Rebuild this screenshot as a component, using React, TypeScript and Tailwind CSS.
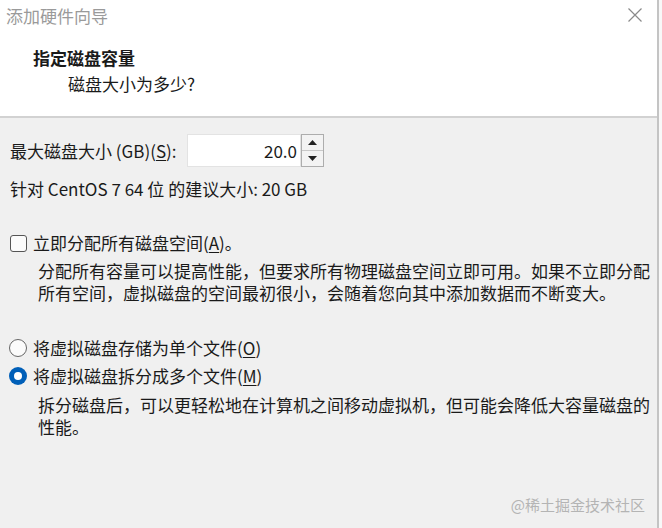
import React from 'react';

// Wizard page: "specify disk capacity"
const font = { fontFamily: '"Noto Sans CJK SC", "Noto Sans", sans-serif' };

function Checkbox() {
  return <span className="w-[17px] h-[17px] border border-[#555] rounded-[3px] bg-[#fbfbfb] shrink-0" />;
}

function Radio({ checked }: { checked?: boolean }) {
  if (checked) {
    return (
      <span className="w-[18px] h-[18px] rounded-full bg-[#005fb8] flex items-center justify-center shrink-0">
        <span className="w-[8px] h-[8px] rounded-full bg-white" />
      </span>
    );
  }
  return <span className="w-[18px] h-[18px] rounded-full border border-[#666] bg-[#fbfbfb] shrink-0" />;
}

function Spinner() {
  return (
    <div className="w-[23px] h-[33px] border border-[#adadad] bg-[#f3f3f3] flex flex-col">
      <div className="flex-1 flex items-center justify-center border-b border-[#c8c8c8]">
        <svg width="9" height="5" viewBox="0 0 9 5">
          <path d="M0 5 L4.5 0 L9 5 Z" fill="#222" />
        </svg>
      </div>
      <div className="flex-1 flex items-center justify-center">
        <svg width="9" height="5" viewBox="0 0 9 5">
          <path d="M0 0 L4.5 5 L9 0 Z" fill="#222" />
        </svg>
      </div>
    </div>
  );
}

export default function App() {
  return (
    <div className="w-[662px] h-[528px] flex bg-white text-[17px] leading-[22px] text-[#1a1a1a]" style={font}>
      <div className="w-[657px] h-full flex flex-col">
        {/* header */}
        <div className="h-[118px] bg-white border-b-2 border-[#d2d2d2] relative">
          <div className="pl-[6px] pt-[5px] text-[#9a9a9a]">添加硬件向导</div>
          <div className="pl-[33px] mt-[20px] font-bold">指定磁盘容量</div>
          <div className="pl-[68px] mt-[4px]">磁盘大小为多少?</div>
          <svg className="absolute right-[15px] top-[8px]" width="14" height="14" viewBox="0 0 14 14">
            <path d="M0.5 0.5 L13.5 13.5 M13.5 0.5 L0.5 13.5" stroke="#8a8a8a" strokeWidth="1.2" />
          </svg>
        </div>

        {/* body */}
        <div className="flex-1 bg-[#f0f0f0] relative pl-[10px] pt-[16px]">
          <div className="flex items-center h-[33px]">
            <span className="w-[177px]">
              最大磁盘大小 (GB)(<span className="underline underline-offset-2">S</span>):
            </span>
            <div className="w-[114px] h-[33px] bg-white border border-[#e3e3e3] flex items-center justify-end pr-[3px]">
              20.0
            </div>
            <Spinner />
          </div>

          <div className="mt-[11px]">针对 CentOS 7 64 位 的建议大小: 20 GB</div>

          <div className="mt-[32px] flex items-center gap-[6px] h-[22px]">
            <Checkbox />
            <span>
              立即分配所有磁盘空间(<span className="underline underline-offset-2">A</span>)。
            </span>
          </div>
          <div className="mt-[6px] pl-[28px]">
            <div>分配所有容量可以提高性能，但要求所有物理磁盘空间立即可用。如果不立即分配</div>
            <div>所有空间，虚拟磁盘的空间最初很小，会随着您向其中添加数据而不断变大。</div>
          </div>

          <div className="mt-[33px] flex items-center gap-[6px] h-[22px] -ml-[1px]">
            <Radio />
            <span>
              将虚拟磁盘存储为单个文件(<span className="underline underline-offset-2">O</span>)
            </span>
          </div>
          <div className="mt-[6px] flex items-center gap-[6px] h-[22px] -ml-[1px]">
            <Radio checked />
            <span>
              将虚拟磁盘拆分成多个文件(<span className="underline underline-offset-2">M</span>)
            </span>
          </div>
          <div className="mt-[7px] pl-[28px]">
            <div>拆分磁盘后，可以更轻松地在计算机之间移动虚拟机，但可能会降低大容量磁盘的</div>
            <div>性能。</div>
          </div>

          <div className="absolute right-[12px] bottom-[13px] text-[15px] leading-[20px] text-[#b4b4b4]">
            @稀土掘金技术社区
          </div>
        </div>
      </div>
      <div className="flex-1 border-l-2 border-[#c4c4c4] bg-[#f8f8f8]" />
    </div>
  );
}
